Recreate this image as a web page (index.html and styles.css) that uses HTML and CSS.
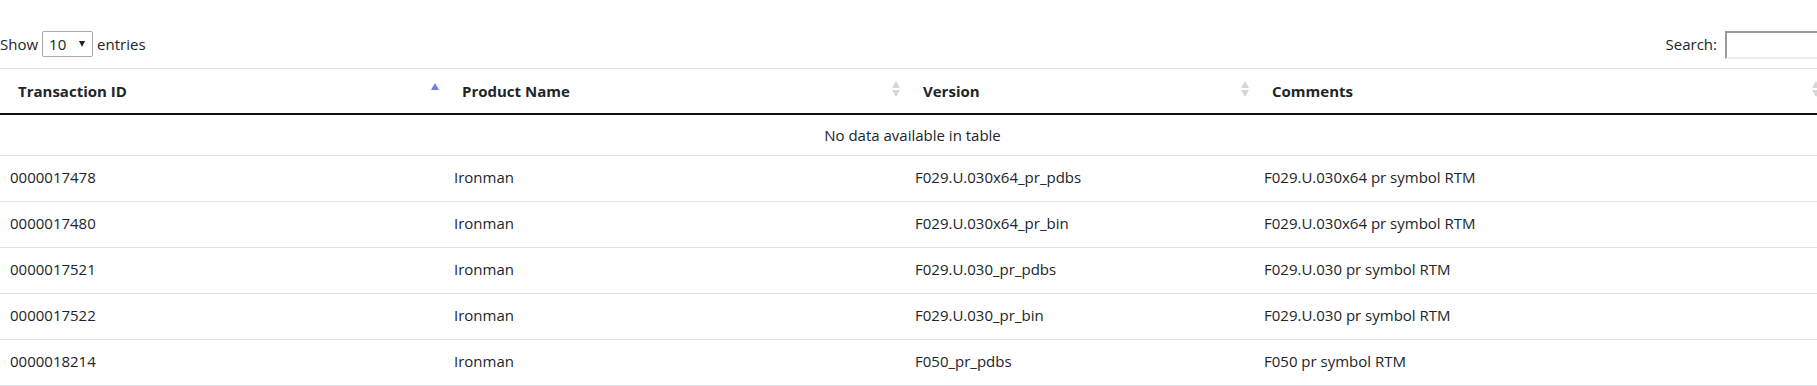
FILE: index.html
```html
<!DOCTYPE html>
<html lang="en">
<head>
    <meta charset="UTF-8">
    <meta name="viewport" content="width=device-width, initial-scale=1.0">
    <title>Transactions</title>
    <link rel="stylesheet" href="styles.css">
</head>
<body>
    <div class="table-wrapper">
        <div class="controls">
            <div class="length">
                Show
                <span class="length-select">10 <span class="caret"></span></span>
                entries
            </div>
            <div class="filter">
                <label for="search">Search:</label>
                <input type="text" id="search">
            </div>
        </div>

        <table class="data-table">
            <colgroup>
                <col class="col-id">
                <col class="col-name">
                <col class="col-version">
                <col class="col-comments">
            </colgroup>
            <thead>
                <tr>
                    <th>Transaction ID<span class="sort asc"></span></th>
                    <th>Product Name<span class="sort"></span></th>
                    <th>Version<span class="sort"></span></th>
                    <th>Comments<span class="sort"></span></th>
                </tr>
            </thead>
            <tbody>
                <tr class="empty">
                    <td colspan="4">No data available in table</td>
                </tr>
                <tr>
                    <td>0000017478</td>
                    <td>Ironman</td>
                    <td>F029.U.030x64_pr_pdbs</td>
                    <td>F029.U.030x64 pr symbol RTM</td>
                </tr>
                <tr>
                    <td>0000017480</td>
                    <td>Ironman</td>
                    <td>F029.U.030x64_pr_bin</td>
                    <td>F029.U.030x64 pr symbol RTM</td>
                </tr>
                <tr>
                    <td>0000017521</td>
                    <td>Ironman</td>
                    <td>F029.U.030_pr_pdbs</td>
                    <td>F029.U.030 pr symbol RTM</td>
                </tr>
                <tr>
                    <td>0000017522</td>
                    <td>Ironman</td>
                    <td>F029.U.030_pr_bin</td>
                    <td>F029.U.030 pr symbol RTM</td>
                </tr>
                <tr>
                    <td>0000018214</td>
                    <td>Ironman</td>
                    <td>F050_pr_pdbs</td>
                    <td>F050 pr symbol RTM</td>
                </tr>
            </tbody>
        </table>
    </div>
</body>
</html>
```

FILE: styles.css
```css
html {
    overflow: hidden;
}
body {
    font-family: 'Open Sans', 'Noto Sans', sans-serif;
    font-size: 15px;
    color: #212529;
    background: #fff;
    margin: 0;
    padding: 0;
}
.table-wrapper {
    width: 1825px;
}
.controls {
    display: flex;
    justify-content: space-between;
    align-items: center;
    padding-top: 29px;
    height: 30px;
    margin-bottom: 9px;
}
.length {
    display: flex;
    align-items: center;
    gap: 4px;
}
.length-select {
    display: inline-flex;
    align-items: center;
    justify-content: space-between;
    box-sizing: border-box;
    width: 51px;
    height: 26px;
    padding: 0 7px 0 6px;
    border: 1px solid #a9a9a9;
    border-radius: 2px;
    line-height: 1;
}
.caret {
    width: 0;
    height: 0;
    border-left: 3px solid transparent;
    border-right: 3px solid transparent;
    border-top: 6px solid #222;
}
.filter {
    display: flex;
    align-items: center;
    gap: 8px;
}
.filter input {
    box-sizing: border-box;
    width: 100px;
    height: 28px;
    margin: 2px 0 0;
    border-top: 2px solid #9a9a9a;
    border-left: 2px solid #9a9a9a;
    border-bottom: 2px solid #ececec;
    border-right: 2px solid #ececec;
    font-family: inherit;
    font-size: 15px;
    outline: none;
}
.data-table {
    width: 1825px;
    table-layout: fixed;
    border-collapse: collapse;
    border-top: 1px solid #dee2e6;
}
.col-id {
    width: 444px;
}
.col-name {
    width: 461px;
}
.col-version {
    width: 349px;
}
.col-comments {
    width: 571px;
}
.data-table th {
    position: relative;
    text-align: left;
    font-weight: bold;
    line-height: 21px;
    padding: 12px 30px 11px 18px;
    border-bottom: 2px solid #111;
}
.data-table td {
    line-height: 21px;
    padding: 11px 10px 13px;
    border-bottom: 1px solid #dee2e6;
}
.data-table tr.empty td {
    text-align: center;
    padding: 10px 10px 9px;
}
.sort {
    position: absolute;
    right: 5px;
    top: 12px;
    width: 8px;
    height: 16px;
}
.sort::before,
.sort::after {
    content: "";
    position: absolute;
    left: 0;
    width: 0;
    height: 0;
    border-left: 4px solid transparent;
    border-right: 4px solid transparent;
}
.sort::before {
    top: 0;
    border-bottom: 7px solid #d6d6d6;
}
.sort::after {
    bottom: 0;
    border-top: 7px solid #d6d6d6;
}
.sort.asc::before {
    top: 2px;
    border-bottom-color: #7d7ade;
}
.sort.asc::after {
    display: none;
}
```
